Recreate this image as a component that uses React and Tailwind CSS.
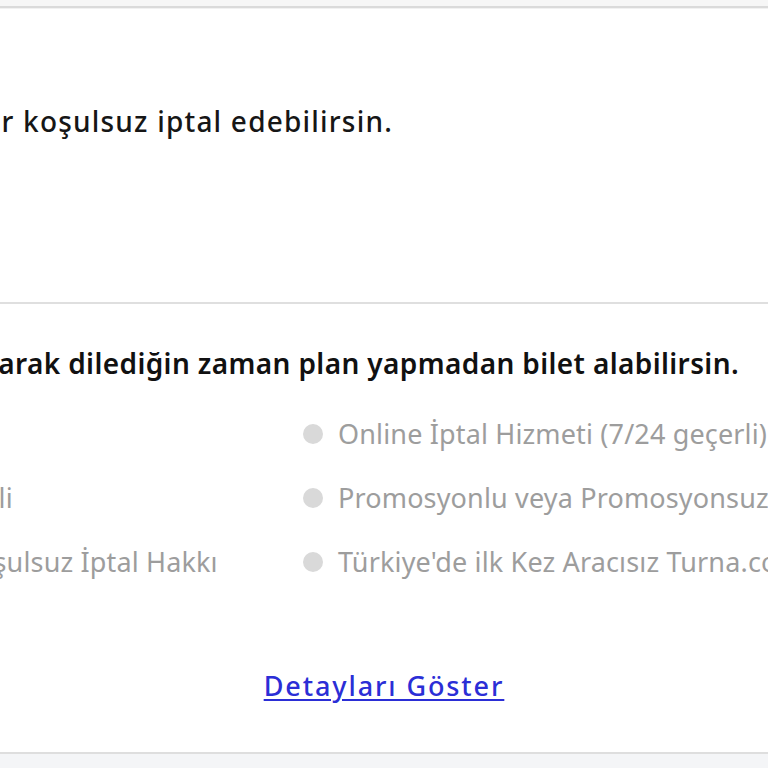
import React from "react";

const features = [
  ["Kolay İade", "Online İptal Hizmeti (7/24 geçerli)"],
  ["1 Yıl Geçerli", "Promosyonlu veya Promosyonsuz Tüm Biletlerde Geçerli"],
  ["Gerçek Koşulsuz İptal Hakkı", "Türkiye'de ilk Kez Aracısız Turna.com Güvencesi"],
];

function Feature({ text }) {
  return (
    <div className="flex h-9 items-center gap-[15px] whitespace-nowrap">
      <span className="h-5 w-5 shrink-0 rounded-full bg-[#d9d9d9]" />
      <span className="text-[27px] font-normal leading-9 tracking-[0.15px] text-[#9d9d9d]">{text}</span>
    </div>
  );
}

export default function App() {
  return (
    <div className="flex h-[768px] w-[768px] flex-col overflow-hidden bg-white font-['Noto_Sans',sans-serif]">
      <div className="h-[6px] shrink-0 bg-[#f6f6f6]" />
      <div className="h-[2px] shrink-0 bg-[#dadada]" />
      <div className="h-px shrink-0 bg-[#f1f1f1]" />

      <section className="h-[293px] shrink-0 pt-[94px]">
        <div className="flex w-[393px] justify-end">
          <p className="shrink-0 whitespace-nowrap text-[28px] font-medium leading-9 tracking-[1.2px] text-[#161616]">
            Biletini uçuş saatine 3 saat kalana kadar koşulsuz iptal edebilirsin.
          </p>
        </div>
      </section>

      <div className="h-[2px] shrink-0 bg-[#dfdfdf]" />

      <section className="flex shrink-0 flex-col pt-[41px]">
        <div className="flex w-[739px] justify-end">
          <p className="shrink-0 whitespace-nowrap text-[28px] font-semibold leading-9 tracking-[0.38px] text-[#111111]">
            Esnek bilet ile iptal güvencesi alarak dilediğin zaman plan yapmadan bilet alabilirsin.
          </p>
        </div>

        <div className="ml-[-171px] mt-[35px] grid grid-cols-[474px_1fr] gap-y-7">
          {features.map(([left, right]) => (
            <React.Fragment key={right}>
              <Feature text={left} />
              <Feature text={right} />
            </React.Fragment>
          ))}
        </div>

        <div className="mt-[88px] flex justify-center">
          <a
            href="#"
            className="text-[27px] font-medium leading-9 tracking-[1.9px] text-[#2b2ed6] underline decoration-2 underline-offset-[3px]"
          >
            Detayları Göster
          </a>
        </div>
      </section>

      <div className="mt-[48px] h-[2px] shrink-0 bg-[#dedede]" />
      <div className="flex-1 bg-[#f4f5f7]" />
    </div>
  );
}
